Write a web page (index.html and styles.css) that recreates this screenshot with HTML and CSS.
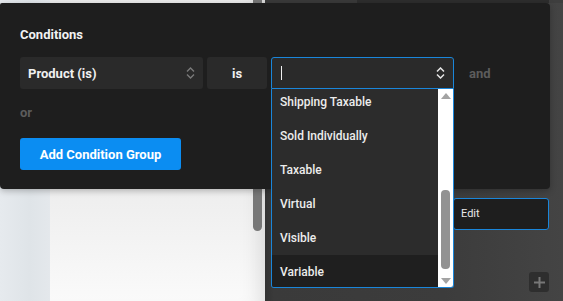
FILE: index.html
```html
<!DOCTYPE html>
<html>
<head>
<meta charset="utf-8">
<link rel="stylesheet" href="styles.css">
</head>
<body>
<div class="app">
  <aside class="rail"></aside>
  <section class="canvas">
    <div class="canvas-thumb"></div>
  </section>
  <main class="editor">
    <div class="editor-top">
      <span class="seg seg-a"></span>
      <span class="seg seg-b"></span>
      <span class="seg seg-c"></span>
    </div>
    <div class="editor-body">
      <div class="edit-box">Edit</div>
      <button class="plus-btn" aria-label="Add">
        <svg width="13" height="13" viewBox="0 0 13 13"><path d="M6.5 1v11M1 6.5h11" stroke="#777" stroke-width="2"/></svg>
      </button>
    </div>
  </main>

  <div class="popup">
    <div class="popup-title">Conditions</div>
    <div class="cond-row">
      <div class="field field-select">
        <span>Product (is)</span>
        <svg class="chev" width="9" height="12" viewBox="0 0 9 12"><path d="M1 4.5L4.5 1L8 4.5M1 7.5L4.5 11L8 7.5" fill="none" stroke="#7a7a7a" stroke-width="1.4"/></svg>
      </div>
      <div class="field field-op">is</div>
      <div class="combo">
        <div class="field field-input">
          <span class="caret"></span>
          <svg class="chev" width="9" height="12" viewBox="0 0 9 12"><path d="M1 4.5L4.5 1L8 4.5M1 7.5L4.5 11L8 7.5" fill="none" stroke="#e6e6e6" stroke-width="1.5"/></svg>
        </div>
        <div class="dropdown">
          <ul class="options">
            <li>Shipping Taxable</li>
            <li>Sold Individually</li>
            <li>Taxable</li>
            <li>Virtual</li>
            <li>Visible</li>
            <li class="active">Variable</li>
          </ul>
          <div class="vscroll">
            <span class="arrow arrow-up"></span>
            <span class="vthumb"></span>
            <span class="arrow arrow-down"></span>
          </div>
        </div>
      </div>
      <span class="joiner">and</span>
    </div>
    <div class="joiner or">or</div>
    <button class="add-btn">Add Condition Group</button>
  </div>
</div>
</body>
</html>
```

FILE: styles.css
```css
* { box-sizing: border-box; }
html, body { margin: 0; padding: 0; }
body {
  width: 563px;
  height: 301px;
  overflow: hidden;
  font-family: Roboto, "Liberation Sans", Arial, sans-serif;
  background: #3a3a3a;
}
.app {
  position: relative;
  display: flex;
  width: 563px;
  height: 301px;
}
.rail {
  width: 50px;
  flex: none;
  background: linear-gradient(90deg, #e6eaee 0%, #dfe4e8 60%, #e4e8ec 100%);
}
.canvas {
  width: 215px;
  flex: none;
  display: flex;
  justify-content: flex-end;
  padding-right: 3px;
  background: linear-gradient(180deg, #ececec 0%, #e6e6e6 40%, #fafafa 100%);
  box-shadow: inset -20px 0 20px -16px rgba(0,0,0,0.12);
}
.canvas-thumb {
  width: 9px;
  height: 231px;
  background: #777;
  border-radius: 0 0 5px 5px;
}
.editor {
  flex: 1;
  display: flex;
  flex-direction: column;
  background: linear-gradient(90deg, #333 0%, #3a3a3a 3%, #3c3c3c 60%, #444 100%);
}
.editor-top {
  display: flex;
  height: 3px;
}
.seg-a { width: 92px; background: #3a3a3a; }
.seg-b { width: 192px; background: #2d2d2d; }
.seg-c { flex: 1; background: #3e3e3e; }
.editor-body {
  display: flex;
  flex-direction: column;
  align-items: flex-end;
  padding: 195px 14px 0 0;
}
.edit-box {
  width: 96px;
  height: 32px;
  border: 1px solid #1a86da;
  border-radius: 3px;
  background: #1e1e1e;
  color: #e8e8e8;
  font-size: 11px;
  line-height: 30px;
  padding-left: 7px;
}
.plus-btn {
  margin-top: 42px;
  width: 20px;
  height: 20px;
  padding: 0;
  border: 0;
  border-radius: 3px;
  background: #2e2e2e;
  display: flex;
  align-items: center;
  justify-content: center;
}

.popup {
  position: absolute;
  left: 0;
  top: 3px;
  width: 550px;
  height: 186px;
  background: #1e1e1e;
  border-radius: 2px 4px 4px 4px;
  padding: 24px 20px 0 20px;
  box-shadow: 0 2px 6px rgba(0,0,0,0.25);
}
.popup-title {
  color: #f2f2f2;
  font-size: 13px;
  font-weight: 700;
  line-height: 16px;
  margin-bottom: 14px;
}
.cond-row {
  display: flex;
  align-items: center;
  gap: 4px;
  height: 32px;
}
.field {
  height: 32px;
  border-radius: 3px;
  background: #2a2a2a;
  color: #f0f0f0;
  font-size: 13px;
  font-weight: 700;
  display: flex;
  align-items: center;
}
.field-select {
  width: 183px;
  padding: 0 8px;
  justify-content: space-between;
}
.field-op {
  width: 60px;
  justify-content: center;
}
.combo {
  position: relative;
  width: 183px;
}
.field-input {
  width: 183px;
  border: 1px solid #1a86da;
  border-radius: 3px 3px 0 0;
  padding: 0 8px 0 9px;
  justify-content: space-between;
}
.caret {
  width: 1px;
  height: 14px;
  background: #f0f0f0;
}
.joiner {
  color: #5c5c5c;
  font-size: 13px;
  font-weight: 700;
  margin-left: 11px;
}
.or {
  margin: 16px 0 0 0;
  line-height: 16px;
}
.add-btn {
  margin-top: 17px;
  width: 161px;
  height: 32px;
  border: 0;
  border-radius: 3px;
  background: #0b8df2;
  color: #fff;
  font-family: inherit;
  font-size: 13px;
  font-weight: 700;
  padding: 0;
}

.dropdown {
  position: absolute;
  left: 0;
  top: 32px;
  width: 183px;
  height: 199px;
  border: 1px solid #1a86da;
  border-top: 0;
  border-radius: 0 0 3px 3px;
  background: #2c2c2c;
  display: flex;
  overflow: hidden;
  z-index: 2;
}
.options {
  list-style: none;
  margin: -4px 0 0 0;
  padding: 0;
  flex: 1;
}
.options li {
  height: 34px;
  line-height: 34px;
  padding-left: 8px;
  color: #ececec;
  font-size: 12px;
  font-weight: 500;
}
.options li.active {
  background: #1f1f1f;
}
.vscroll {
  width: 15px;
  flex: none;
  background: #fff;
  position: relative;
  display: flex;
  flex-direction: column;
  align-items: center;
}
.arrow {
  width: 0;
  height: 0;
  border-left: 5px solid transparent;
  border-right: 5px solid transparent;
}
.arrow-up {
  margin-top: 4px;
  border-bottom: 6px solid #a3a3a3;
}
.vthumb {
  margin-top: 91px;
  width: 9px;
  height: 79px;
  border-radius: 4px;
  background: #929292;
}
.arrow-down {
  margin-top: 9px;
  border-top: 6px solid #a3a3a3;
}
```
